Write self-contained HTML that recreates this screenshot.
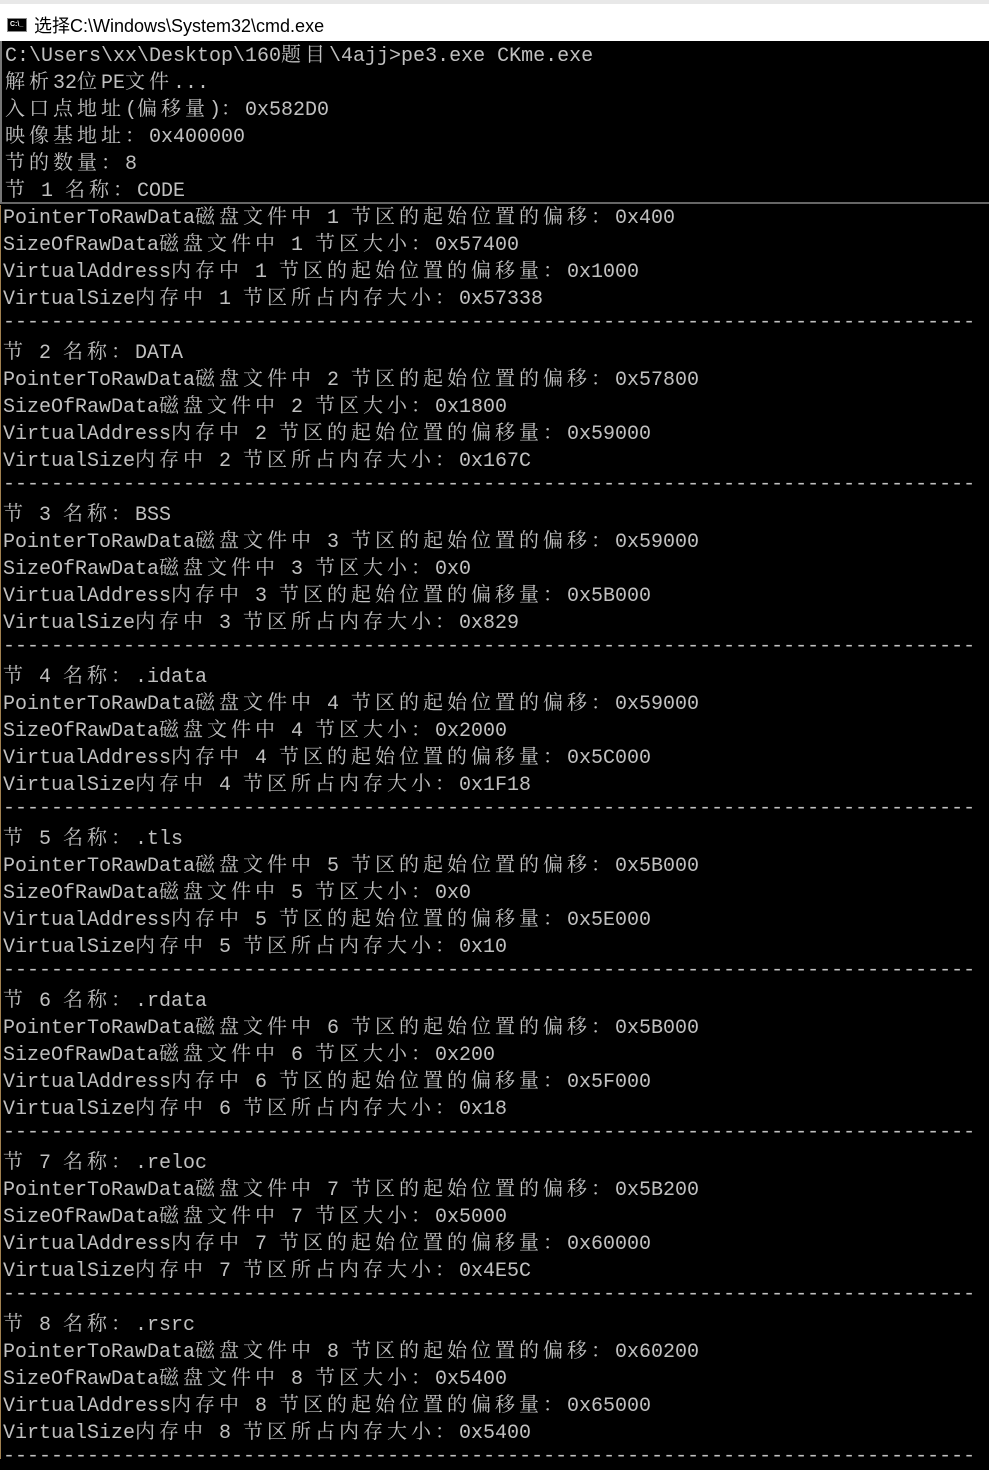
<!DOCTYPE html>
<html><head><meta charset="utf-8"><style>
html,body{margin:0;padding:0;width:989px;height:1459px;overflow:hidden;background:#000;}
#title{position:absolute;left:0;top:0;width:989px;height:41px;background:#fff;border-top:4px solid #e8e8e8;box-sizing:border-box;}
#title .ic{position:absolute;left:7px;top:14px;width:20px;height:14px;background:#000;border:1px solid #888;box-sizing:border-box;color:#fff;font:bold 7px "Liberation Sans",sans-serif;line-height:12px;padding-left:2px;}
#title .t{position:absolute;left:34px;top:8px;font:18px "Liberation Sans","Noto Sans CJK SC",sans-serif;color:#000;}
#top{position:absolute;left:0;top:41px;width:989px;height:163px;border-left:2px solid #777;border-bottom:2px solid #666;box-sizing:border-box;}
#bot{position:absolute;left:0;top:205px;width:989px;height:1254px;border-left:1px solid #a08050;box-sizing:border-box;}
.l{position:absolute;white-space:pre;font:20px/27px "Liberation Mono","Noto Serif CJK SC",monospace;color:#c0c0c0;height:27px;}
.c{font-family:"Noto Serif CJK SC","Noto Sans CJK SC",serif;letter-spacing:4px;}
</style></head><body>
<div id="title"><div class="ic">C:\_</div><div class="t">选择C:\Windows\System32\cmd.exe</div></div>
<div id="top"></div><div id="bot"></div>
<div id="out"></div>
<script>
var L=["C:\\Users\\xx\\Desktop\\160题目\\4ajj>pe3.exe CKme.exe","解析32位PE文件...","入口点地址(偏移量)：0x582D0","映像基地址：0x400000","节的数量：8"];
var S=[["CODE","0x400","0x57400","0x1000","0x57338"],["DATA","0x57800","0x1800","0x59000","0x167C"],["BSS","0x59000","0x0","0x5B000","0x829"],[".idata","0x59000","0x2000","0x5C000","0x1F18"],[".tls","0x5B000","0x0","0x5E000","0x10"],[".rdata","0x5B000","0x200","0x5F000","0x18"],[".reloc","0x5B200","0x5000","0x60000","0x4E5C"],[".rsrc","0x60200","0x5400","0x65000","0x5400"]];
var D=new Array(82).join("-");
S.forEach(function(s,i){var n=i+1;
L.push("节 "+n+" 名称："+s[0]);
L.push("PointerToRawData磁盘文件中 "+n+" 节区的起始位置的偏移："+s[1]);
L.push("SizeOfRawData磁盘文件中 "+n+" 节区大小："+s[2]);
L.push("VirtualAddress内存中 "+n+" 节区的起始位置的偏移量："+s[3]);
L.push("VirtualSize内存中 "+n+" 节区所占内存大小："+s[4]);
L.push(D);});
var h="";
L.forEach(function(t,i){var y=39+27*i;var x=i<6?5:3;
var e=t.replace(/&/g,"&amp;").replace(/</g,"&lt;").replace(/>/g,"&gt;").replace(/([\u3000-\uffff]+)/g,'<span class="c">$1</span>');
h+='<div class="l" style="left:'+x+'px;top:'+y+'px">'+e+'</div>';});
document.getElementById("out").innerHTML=h;
</script>
</body></html>
